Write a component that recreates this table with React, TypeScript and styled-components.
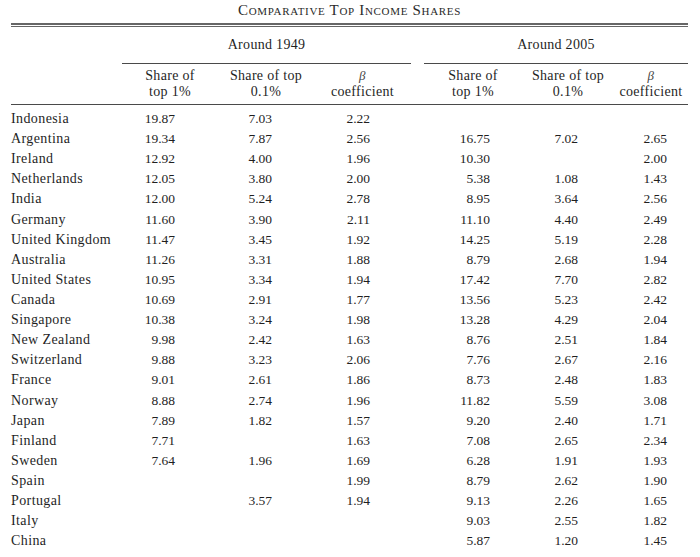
import React from "react";
import styled, { createGlobalStyle } from "styled-components";

const GlobalStyle = createGlobalStyle`
  html, body {
    margin: 0;
    padding: 0;
    background: #ffffff;
  }
  body {
    font-family: "Liberation Serif", "Times New Roman", serif;
    color: #1f1f1f;
  }
`;

const COLS = "111px 96px 96px 97px 13px 98px 92px 74px";

const Page = styled.div`
  width: 700px;
  height: 557px;
  box-sizing: border-box;
  padding: 0 12px 0 11px;
  overflow: hidden;
`;

const Title = styled.div`
  height: 23px;
  box-sizing: border-box;
  padding-top: 1px;
  line-height: 18px;
  text-align: center;
  font-size: 15px;
  font-variant: small-caps;
  letter-spacing: 0.68px;
  color: #2a2a2a;
`;

const DoubleRule = styled.div`
  height: 1px;
  border-top: 2px solid #666;
  border-bottom: 1px solid #666;
`;

const Grid = styled.div`
  display: grid;
  grid-template-columns: ${COLS};
`;

const GroupHead = styled.div<{ $start: number; $span: number }>`
  grid-column: ${(p) => p.$start} / span ${(p) => p.$span};
  padding: 8px 0 8px;
  line-height: 20px;
  font-size: 14px;
  letter-spacing: 0.3px;
  text-align: center;
  border-bottom: 1px solid #4a4a4a;
`;

const Spacer = styled.div<{ $start: number }>`
  grid-column: ${(p) => p.$start} / span 1;
`;

const HeadRow = styled(Grid)`
  padding: 4px 0;
  border-bottom: 1px solid #4a4a4a;
`;

const ColHead = styled.div`
  text-align: center;
  font-size: 14px;
  letter-spacing: 0.3px;
  line-height: 16px;
`;

const Beta = styled.span`
  font-style: italic;
  font-size: 13px;
  color: #444;
`;

const Body = styled.div`
  padding-top: 4px;
`;

const Row = styled(Grid)`
  height: 20.12px;
  line-height: 20.12px;
`;

const Name = styled.div`
  font-size: 14px;
  letter-spacing: 0.4px;
  white-space: nowrap;
`;

const Num = styled.div<{ $pr: number }>`
  font-size: 13.5px;
  text-align: right;
  padding-right: ${(p) => p.$pr}px;
`;

type R = [string, ...(string | null)[]];

const rows: R[] = [
  ["Indonesia", "19.87", "7.03", "2.22", null, null, null],
  ["Argentina", "19.34", "7.87", "2.56", "16.75", "7.02", "2.65"],
  ["Ireland", "12.92", "4.00", "1.96", "10.30", null, "2.00"],
  ["Netherlands", "12.05", "3.80", "2.00", "5.38", "1.08", "1.43"],
  ["India", "12.00", "5.24", "2.78", "8.95", "3.64", "2.56"],
  ["Germany", "11.60", "3.90", "2.11", "11.10", "4.40", "2.49"],
  ["United Kingdom", "11.47", "3.45", "1.92", "14.25", "5.19", "2.28"],
  ["Australia", "11.26", "3.31", "1.88", "8.79", "2.68", "1.94"],
  ["United States", "10.95", "3.34", "1.94", "17.42", "7.70", "2.82"],
  ["Canada", "10.69", "2.91", "1.77", "13.56", "5.23", "2.42"],
  ["Singapore", "10.38", "3.24", "1.98", "13.28", "4.29", "2.04"],
  ["New Zealand", "9.98", "2.42", "1.63", "8.76", "2.51", "1.84"],
  ["Switzerland", "9.88", "3.23", "2.06", "7.76", "2.67", "2.16"],
  ["France", "9.01", "2.61", "1.86", "8.73", "2.48", "1.83"],
  ["Norway", "8.88", "2.74", "1.96", "11.82", "5.59", "3.08"],
  ["Japan", "7.89", "1.82", "1.57", "9.20", "2.40", "1.71"],
  ["Finland", "7.71", null, "1.63", "7.08", "2.65", "2.34"],
  ["Sweden", "7.64", "1.96", "1.69", "6.28", "1.91", "1.93"],
  ["Spain", null, null, "1.99", "8.79", "2.62", "1.90"],
  ["Portugal", null, "3.57", "1.94", "9.13", "2.26", "1.65"],
  ["Italy", null, null, null, "9.03", "2.55", "1.82"],
  ["China", null, null, null, "5.87", "1.20", "1.45"],
];

const pads = [43, 42, 41, 32, 36, 21];

const heads = [
  ["Share of", "top 1%"],
  ["Share of top", "0.1%"],
  ["beta", "coefficient"],
];

function HeadCells() {
  return (
    <>
      {heads.map((h, i) => (
        <ColHead key={i}>
          <div>{h[0] === "beta" ? <Beta>β</Beta> : h[0]}</div>
          <div>{h[1]}</div>
        </ColHead>
      ))}
    </>
  );
}

export default function App() {
  return (
    <>
      <GlobalStyle />
      <Page>
        <Title>Comparative Top Income Shares</Title>
        <DoubleRule />
        <Grid>
          <Spacer $start={1} />
          <GroupHead $start={2} $span={3}>Around 1949</GroupHead>
          <Spacer $start={5} />
          <GroupHead $start={6} $span={3}>Around 2005</GroupHead>
        </Grid>
        <HeadRow>
          <div />
          <HeadCells />
          <div />
          <HeadCells />
        </HeadRow>
        <Body>
          {rows.map((r) => (
            <Row key={r[0]}>
              <Name>{r[0]}</Name>
              {r.slice(1, 4).map((v, i) => (
                <Num key={i} $pr={pads[i]}>{v ?? ""}</Num>
              ))}
              <div />
              {r.slice(4, 7).map((v, i) => (
                <Num key={i + 3} $pr={pads[i + 3]}>{v ?? ""}</Num>
              ))}
            </Row>
          ))}
        </Body>
      </Page>
    </>
  );
}
